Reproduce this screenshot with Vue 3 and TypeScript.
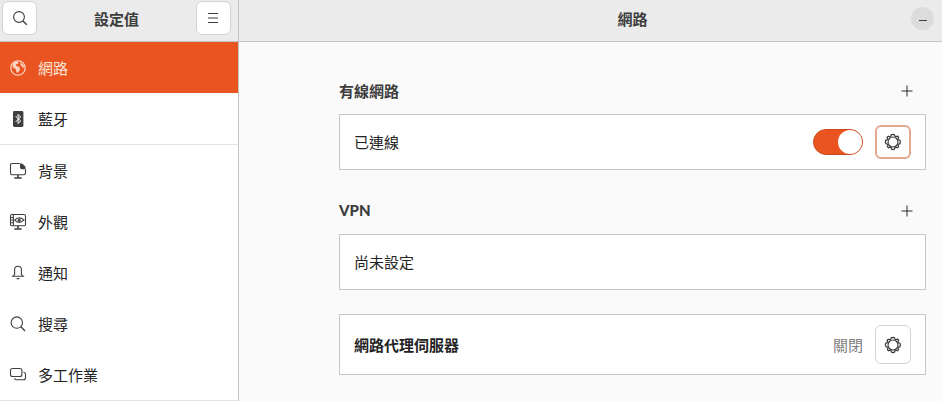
<script setup lang="ts">
interface NavItem { label: string; icon: string; selected?: boolean; divider?: boolean }
const nav: NavItem[] = [
  { label: '網路', icon: 'globe', selected: true },
  { label: '藍牙', icon: 'bt', divider: true },
  { label: '背景', icon: 'bg' },
  { label: '外觀', icon: 'look' },
  { label: '通知', icon: 'bell' },
  { label: '搜尋', icon: 'search' },
  { label: '多工作業', icon: 'multi' },
]
const gearPath = 'M8 1.2l1.3.3.4 1.3 1.1.5 1.2-.6 1 1-.6 1.2.5 1.1 1.3.4.3 1.6-.3 1.5-1.3.4-.5 1.1.6 1.2-1 1-1.2-.6-1.1.5-.4 1.3-1.3.3-1.3-.3-.4-1.3-1.1-.5-1.2.6-1-1 .6-1.2-.5-1.1-1.3-.4L1.2 8l.3-1.5 1.3-.4.5-1.1-.6-1.2 1-1 1.2.6 1.1-.5.4-1.3z'
</script>

<template>
  <div class="window">
    <aside class="side">
      <header class="side-head">
        <button class="hbtn" aria-label="搜尋">
          <svg width="16" height="16" viewBox="0 0 16 16" fill="none" stroke="#3d3d3d" stroke-width="1.1">
            <circle cx="7" cy="7" r="5.4" /><path d="M11 11l3.8 3.8" stroke-width="1.4" />
          </svg>
        </button>
        <h1 class="title">設定值</h1>
        <button class="hbtn" aria-label="選單">
          <svg width="16" height="16" viewBox="0 0 16 16" fill="none" stroke="#3d3d3d" stroke-width="1">
            <path d="M3 3.5h10M3 8h10M3 12.5h10" />
          </svg>
        </button>
      </header>
      <nav class="list">
        <div v-for="item in nav" :key="item.label" class="row" :class="{ selected: item.selected, divider: item.divider }">
          <span class="ico">
            <svg v-if="item.icon === 'globe'" width="18" height="18" viewBox="0 0 18 18">
              <circle cx="9" cy="9" r="7.2" fill="none" stroke="#fbd3bf" stroke-width="1.3" />
              <path d="M3.5 5l3-2.6 3 .3-.6 2-2 .7.4 1.7 3.2 1 .4 2.6-2 3-1.4-.4-.8-3.2-2.6-1.4zM11.5 3.6l3 2.4.8 3-1.8-.8-2-2.2z" fill="#fbd3bf" />
            </svg>
            <svg v-else-if="item.icon === 'bt'" width="18" height="18" viewBox="0 0 18 18">
              <rect x="4" y="1" width="10.4" height="16" rx="1.4" fill="#3f3f3f" />
              <path d="M6.6 6l5 5-2.5 2.6V4.4L11.6 7l-5 5" fill="none" stroke="#fff" stroke-width="1" />
            </svg>
            <svg v-else-if="item.icon === 'bg'" width="18" height="18" viewBox="0 0 18 18" fill="none" stroke="#3f3f3f" stroke-width="1.1">
              <path d="M10.8 1.5H3a1.6 1.6 0 0 0-1.5 1.6v8.1A1.6 1.6 0 0 0 3 12.8h12a1.6 1.6 0 0 0 1.5-1.6V7.2" />
              <path d="M11 1.5h2.2l3.3 3.3v2.4H13a2 2 0 0 1-2-2z" fill="#3f3f3f" stroke="none" />
              <path d="M9 13v2.6M5.3 16h7.4" stroke-width="1.6" />
            </svg>
            <svg v-else-if="item.icon === 'look'" width="18" height="18" viewBox="0 0 18 18" fill="none" stroke="#3f3f3f" stroke-width="1.1">
              <rect x="1.5" y="1.5" width="15" height="11.3" rx="1.4" />
              <path d="M4.4 1.8v10.8M1.8 4.5h2.6M1.8 7h2.6M1.8 9.8h2.6" />
              <path d="M5.6 7.2Q10 2.6 15 7.2 10 11.6 5.6 7.2z" />
              <circle cx="10.2" cy="7.2" r="1.5" fill="#3f3f3f" stroke="none" />
              <path d="M9 13v2.6M5.3 16h7.4" stroke-width="1.6" />
            </svg>
            <svg v-else-if="item.icon === 'bell'" width="18" height="18" viewBox="0 0 18 18" fill="none" stroke="#3f3f3f" stroke-width="1.1">
              <path d="M5.6 10.6V5.6a3.4 3.4 0 0 1 6.8 0v5l1.8 1.6H3.8z" />
              <path d="M7.6 14.6h2.8" stroke-width="1.3" />
            </svg>
            <svg v-else-if="item.icon === 'search'" width="18" height="18" viewBox="0 0 18 18" fill="none" stroke="#3f3f3f" stroke-width="1.1">
              <circle cx="7.8" cy="7.6" r="5.7" /><path d="M12 11.8l4 4.2" stroke-width="1.3" />
            </svg>
            <svg v-else width="18" height="18" viewBox="0 0 18 18" fill="none" stroke="#3f3f3f" stroke-width="1.1">
              <rect x="1.5" y="2.5" width="11.4" height="8" rx="2" />
              <path d="M14.4 6.2h.4a2 2 0 0 1 1.7 2v3.6a2 2 0 0 1-2 2H7.6a2 2 0 0 1-2-1.7" />
            </svg>
          </span>
          <span class="label">{{ item.label }}</span>
        </div>
      </nav>
    </aside>

    <main class="main">
      <header class="main-head">
        <h2 class="title main-title">網路</h2>
        <button class="min" aria-label="最小化"><span class="dash"></span></button>
      </header>
      <div class="content">
        <div class="column">
          <section class="sec">
            <div class="sec-head">
              <h3>有線網路</h3>
              <svg class="plus" width="12" height="12" viewBox="0 0 12 12" stroke="#2d2d2d" stroke-width="1"><path d="M6 .5v11M.5 6h11" /></svg>
            </div>
            <div class="card wired">
              <span class="text">已連線</span>
              <span class="right">
                <span class="switch"><span class="knob"></span></span>
                <button class="gear focus" aria-label="設定">
                  <svg width="18" height="18" viewBox="0 0 16 16" fill="none" stroke="#3d3d3d">
                    <path :d="gearPath" stroke-width="1.1" /><circle cx="8" cy="8" r="4.4" stroke-width="1" />
                  </svg>
                </button>
              </span>
            </div>
          </section>
          <section class="sec">
            <div class="sec-head">
              <h3 class="latin">VPN</h3>
              <svg class="plus" width="12" height="12" viewBox="0 0 12 12" stroke="#2d2d2d" stroke-width="1"><path d="M6 .5v11M.5 6h11" /></svg>
            </div>
            <div class="card wired"><span class="text">尚未設定</span></div>
          </section>
          <div class="card proxy">
            <span class="text strong">網路代理伺服器</span>
            <span class="right">
              <span class="off">關閉</span>
              <button class="gear tall" aria-label="設定">
                <svg width="18" height="18" viewBox="0 0 16 16" fill="none" stroke="#3d3d3d">
                  <path :d="gearPath" stroke-width="1.1" /><circle cx="8" cy="8" r="4.4" stroke-width="1" />
                </svg>
              </button>
            </span>
          </div>
        </div>
      </div>
    </main>
  </div>
</template>

<style scoped>
.window {
  display: flex;
  width: 942px;
  height: 401px;
  overflow: hidden;
  font-family: "Noto Sans CJK TC", "Noto Sans", sans-serif;
  font-size: 15px;
  color: #232323;
  background: #fafafa;
}
.side {
  width: 238px;
  flex: none;
  display: flex;
  flex-direction: column;
  background: #fff;
  border-right: 1px solid #c4c4c4;
  border-bottom: 1px solid #e3e3e3;
  box-sizing: content-box;
  height: 400px;
}
.side-head, .main-head {
  height: 41px;
  flex: none;
  box-sizing: border-box;
  background: #ebebeb;
  display: flex;
  align-items: center;
}
.side-head {
  justify-content: space-between;
  padding: 0 7px 5px 2px;
  margin-bottom: 1px;
  box-shadow: 0 1px 0 #c4c4c4;
}
.hbtn {
  width: 35px;
  height: 34px;
  padding: 0;
  display: flex;
  align-items: center;
  justify-content: center;
  background: #fff;
  border: 1px solid #d2d2d2;
  border-radius: 6px;
}
.title {
  margin: 0;
  font-size: 15px;
  font-weight: 700;
  color: #3d3d3d;
}
.list { flex: 1; display: flex; flex-direction: column; }
.row {
  height: 51px;
  flex: none;
  box-sizing: border-box;
  display: flex;
  align-items: center;
  padding-left: 9px;
  gap: 11px;
  color: #232323;
}
.row.selected { background: #e95420; color: #fde3d6; }
.row.divider { border-bottom: 1px solid #e3e3e3; height: 52px; }
.ico { width: 18px; height: 18px; display: flex; }
.label { line-height: 20px; }
.main { flex: 1; display: flex; flex-direction: column; min-width: 0; }
.main-head {
  position: relative;
  justify-content: center;
  border-bottom: 1px solid #c4c4c4;
  height: 42px;
  padding-bottom: 4px;
  padding-left: 84px;
}
.main-title { line-height: 20px; }
.min {
  position: absolute;
  right: 8px;
  top: 7px;
  width: 23px;
  height: 23px;
  padding: 0;
  border: none;
  border-radius: 50%;
  background: #dcdcdc;
  display: flex;
  align-items: center;
  justify-content: center;
}
.dash { width: 8px; height: 1px; margin-top: 4px; background: #3d3d3d; }
.content { flex: 1; padding: 36px 16px 0 100px; }
.column { display: flex; flex-direction: column; width: 587px; }
.sec { display: flex; flex-direction: column; margin-bottom: 28px; }
.sec + .sec { margin-bottom: 24px; }
.sec-head {
  height: 26px;
  margin-bottom: 10px;
  display: flex;
  align-items: center;
  justify-content: space-between;
  padding-right: 13px;
}
.sec-head h3 {
  margin: 0;
  font-size: 15px;
  font-weight: 700;
  color: #3d3d3d;
  line-height: 26px;
}
.sec-head .latin { font-family: Lato, "Noto Sans", sans-serif; font-weight: 900; line-height: 24px; margin-bottom: 2px; }
.card {
  box-sizing: border-box;
  background: #fff;
  border: 1px solid #c6c6c6;
  display: flex;
  align-items: center;
  justify-content: space-between;
  padding: 0 14px;
}
.wired { height: 56px; }
.proxy { height: 61px; }
.text { margin-bottom: 2px; }
.strong { font-weight: 700; margin-bottom: 0; }
.right { display: flex; align-items: center; gap: 12px; }
.switch {
  width: 50px;
  height: 26px;
  box-sizing: border-box;
  background: #e95420;
  border: 1px solid #c94a1d;
  border-radius: 13px;
  display: flex;
  justify-content: flex-end;
  align-items: center;
}
.knob { width: 24px; height: 24px; background: #fff; border-radius: 50%; }
.gear {
  width: 36px;
  height: 34px;
  padding: 0;
  display: flex;
  align-items: center;
  justify-content: center;
  background: #fff;
  border: 1px solid #d2d2d2;
  border-radius: 6px;
}
.gear.focus { border: 2px solid #e3a68e; }
.gear.tall { height: 39px; }
.off { color: #808080; }
</style>

<style>
body { margin: 0; }
</style>
